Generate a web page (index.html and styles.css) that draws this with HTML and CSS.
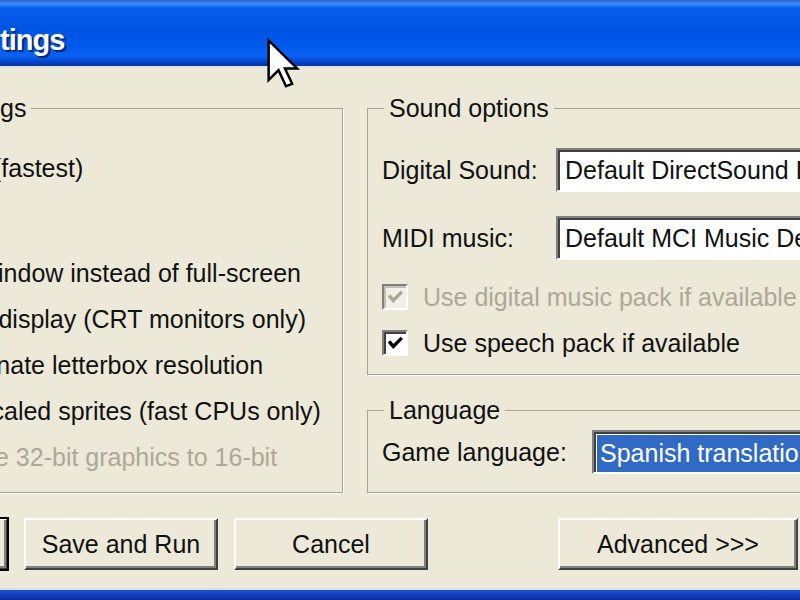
FILE: index.html
```html
<!DOCTYPE html>
<html lang="en">

<head>
    <meta charset="UTF-8">
    <title>Game Setup - Settings</title>
    <link rel="stylesheet" href="styles.css">
</head>

<body>
    <div class="window">
        <div class="titlebar"><span class="title">tings</span></div>

        <div class="client">
            <div class="columns">
                <!-- graphics group, mostly off the left edge -->
                <fieldset class="group group-gfx">
                    <legend>gs</legend>
                    <div class="opt opt-first cut-6">(fastest)</div>
                    <div class="opt opt-gap cut-19">window instead of full-screen</div>
                    <div class="opt cut-20">z display (CRT monitors only)</div>
                    <div class="opt cut-11">rnate letterbox resolution</div>
                    <div class="opt cut-20">scaled sprites (fast CPUs only)</div>
                    <div class="opt cut-4 disabled">e 32-bit graphics to 16-bit</div>
                </fieldset>

                <div class="right">
                    <fieldset class="group group-sound">
                        <legend>Sound options</legend>
                        <div class="field field-first">
                            <span class="label">Digital Sound:</span>
                            <span class="combo">Default DirectSound Device</span>
                        </div>
                        <div class="field">
                            <span class="label">MIDI music:</span>
                            <span class="combo">Default MCI Music Device</span>
                        </div>
                        <div class="check-row check-row-first disabled">
                            <span class="check">
                                <svg viewBox="0 0 26 26"><polyline points="6,11 11,17 21,7" /></svg>
                            </span>
                            Use digital music pack if available
                        </div>
                        <div class="check-row">
                            <span class="check">
                                <svg viewBox="0 0 26 26"><polyline points="6,11 11,17 21,7" /></svg>
                            </span>
                            Use speech pack if available
                        </div>
                    </fieldset>

                    <fieldset class="group group-lang">
                        <legend>Language</legend>
                        <div class="field field-lang">
                            <span class="label label-wide">Game language:</span>
                            <span class="combo combo-select"><span class="selected">Spanish translation</span></span>
                        </div>
                    </fieldset>
                </div>
            </div>

            <div class="buttons">
                <button class="btn btn-default">Save</button>
                <button class="btn">Save and Run</button>
                <button class="btn">Cancel</button>
                <button class="btn btn-advanced">Advanced &gt;&gt;&gt;</button>
            </div>
        </div>

        <div class="frame-bottom"></div>

        <!-- mouse pointer over the title bar -->
        <svg class="cursor" viewBox="0 0 14 21" width="35" height="52">
            <path d="M1 1 L1 17 L5 13 L8 19.5 L10.5 18.5 L7.6 12.3 L12.5 12.3 Z" />
        </svg>
    </div>
</body>

</html>
```

FILE: styles.css
```css
* {
    margin: 0;
    padding: 0;
    box-sizing: border-box;
}

body {
    width: 800px;
    height: 600px;
    overflow: hidden;
    background: #ece9d8;
    font-family: "Liberation Sans", Arial, sans-serif;
    font-size: 25px;
    color: #111;
}

.window {
    position: relative;
    height: 600px;
    display: flex;
    flex-direction: column;
}

/* 标题栏 */
.titlebar {
    height: 68px;
    padding-top: 14px;
    background: linear-gradient(to bottom,
            #2b62d8 0,
            #3d8ef8 4px,
            #0a5eee 8px,
            #0054e3 30px,
            #0058ea 44px,
            #0a62f4 56px,
            #0548d0 61px,
            #0a36a8 65px,
            #0a36a8 66px,
            #dde4f3 66px);
}

.title {
    display: block;
    font-weight: bold;
    font-size: 29px;
    line-height: 52px;
    letter-spacing: -1px;
    color: #fff;
    text-shadow: 2px 2px 1px #0a2470;
}

.client {
    flex: 1;
    padding-top: 25px;
}

.columns {
    display: flex;
    align-items: flex-start;
    gap: 24px;
}

/* 分组框 */
.group {
    border: 1px solid #a7a596;
    padding: 0 14px;
    min-inline-size: 0;
    box-shadow: 1px 1px 0 #fff;
}

.group legend {
    padding: 0 5px;
    margin-left: 2px;
    line-height: 30px;
}

.group-gfx {
    flex: none;
    width: 359px;
    margin-left: -16px;
    padding-bottom: 12px;
}

.group-gfx legend {
    margin-left: -4px;
}

.opt {
    height: 46px;
    line-height: 46px;
    white-space: nowrap;
}

.opt-first {
    height: 44px;
    line-height: 44px;
    margin-top: 23px;
}

.opt-gap {
    margin-top: 60px;
}

/* 左侧被窗口边缘裁掉的文字 */
.cut-4 { margin-left: -4px; }
.cut-6 { margin-left: -6px; }
.cut-11 { margin-left: -11px; }
.cut-19 { margin-left: -19px; }
.cut-20 { margin-left: -20px; }

.disabled {
    color: #aca899;
}

.right {
    flex: none;
    width: 460px;
}

.group-sound {
    padding-bottom: 16px;
}

.group-lang {
    margin-top: 20px;
    padding-bottom: 18px;
}

.field {
    display: flex;
    align-items: center;
    height: 44px;
    margin-top: 24px;
    white-space: nowrap;
}

.field-first {
    margin-top: 25px;
}

.field-lang {
    margin-top: 5px;
}

.label {
    flex: none;
    width: 174px;
}

.label-wide {
    width: 210px;
}

/* 下拉框 */
.combo {
    flex: 1;
    height: 44px;
    line-height: 40px;
    padding-left: 7px;
    background: #fff;
    border: 2px solid;
    border-color: #808080 #fff #fff #808080;
    box-shadow: inset 2px 2px 0 #404040;
    overflow: hidden;
}

.combo-select {
    padding: 3px 0 0 3px;
    line-height: 36px;
}

.combo-select .selected {
    display: block;
    height: 37px;
    padding-left: 3px;
    background: #316ac5;
    color: #fff;
}

/* 复选框 */
.check-row {
    display: flex;
    align-items: center;
    height: 30px;
    margin-top: 16px;
    white-space: nowrap;
}

.check-row-first {
    margin-top: 22px;
}

.check {
    flex: none;
    width: 26px;
    height: 26px;
    margin-right: 15px;
    background: #fff;
    border: 2px solid;
    border-color: #808080 #fff #fff #808080;
    box-shadow: inset 2px 2px 0 #404040;
}

.check svg {
    display: block;
    width: 22px;
    height: 22px;
}

.check polyline {
    fill: none;
    stroke: #000;
    stroke-width: 4;
}

.disabled .check {
    background: #f1efe6;
    box-shadow: inset 2px 2px 0 #c2c0b4;
}

.disabled .check polyline {
    stroke: #aca899;
}

/* 按钮 */
.buttons {
    display: flex;
    gap: 16px;
    margin-top: 25px;
}

.btn {
    flex: none;
    width: 194px;
    height: 52px;
    font: inherit;
    color: #111;
    background: #ece9d8;
    border: 2px solid;
    border-color: #fff #404040 #404040 #fff;
    box-shadow: inset -2px -2px 0 #808080;
}

.btn-default {
    margin-left: -186px;
    outline: 2px solid #000;
    outline-offset: -1px;
}

.btn-advanced {
    width: 240px;
    margin-left: 114px;
}

.frame-bottom {
    height: 12px;
    background: linear-gradient(to bottom, #d6dff5 0, #d6dff5 2px, #1d4fd8 2px, #0a2f9e 12px);
}

.cursor {
    position: absolute;
    left: 266px;
    top: 38px;
}

.cursor path {
    fill: #fff;
    stroke: #000;
    stroke-width: 1;
    stroke-linejoin: miter;
}
```
